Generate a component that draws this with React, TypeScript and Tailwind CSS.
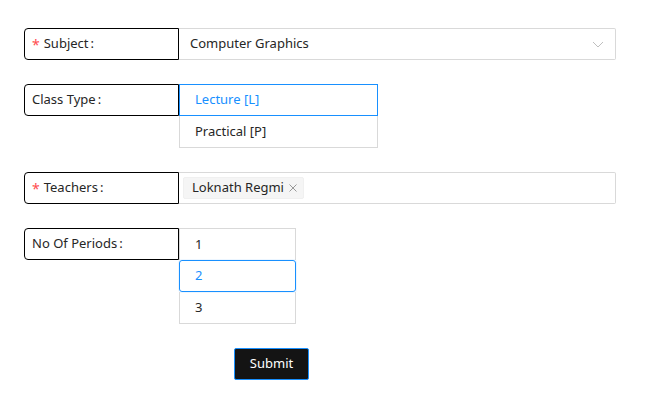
import React from "react";

const font = { fontFamily: '"Noto Sans", "Open Sans", sans-serif' };

function Label({ text, required }: { text: string; required?: boolean }) {
  return (
    <div className="w-[155px] h-[32px] shrink-0 border border-black rounded-l-[4px] flex items-center pl-[7px] text-[13px] text-[#262626]">
      {required && <span className="text-[#ff4d4f] mr-[4px] text-[14px]">*</span>}
      <span>{text}</span>
      <span className="ml-[2px]">:</span>
    </div>
  );
}

export default function App() {
  return (
    <div className="w-[660px] h-[405px] bg-white pt-[28px] pl-[24px]" style={font}>
      <div className="flex flex-col gap-[24px] w-[592px]">
        {/* Subject */}
        <div className="flex">
          <Label text="Subject" required />
          <div className="flex-1 h-[32px] border border-[#d9d9d9] border-l-0 rounded-r-[2px] flex items-center justify-between pl-[11px] pr-[11px] text-[13px] text-[#262626]">
            <span>Computer Graphics</span>
            <svg width="12" height="12" viewBox="0 0 12 12" fill="none">
              <path d="M1 4 L6 9 L11 4" stroke="#bfbfbf" strokeWidth="1" />
            </svg>
          </div>
        </div>

        {/* Class Type */}
        <div className="flex items-start">
          <Label text="Class Type" />
          <div className="flex flex-col w-[199px] text-[13px]">
            <div className="h-[32px] border border-[#1890ff] flex items-center pl-[15px] text-[#1890ff]">Lecture [L]</div>
            <div className="h-[32px] border border-[#d9d9d9] border-t-0 flex items-center pl-[15px] text-[#262626]">Practical [P]</div>
          </div>
        </div>

        {/* Teachers */}
        <div className="flex">
          <Label text="Teachers" required />
          <div className="flex-1 h-[32px] border border-[#d9d9d9] border-l-0 rounded-r-[2px] flex items-center pl-[4px] text-[13px] text-[#262626]">
            <div className="h-[22px] bg-[#f5f5f5] border border-[#f0f0f0] rounded-[2px] flex items-center pl-[8px] pr-[6px]">
              <span>Loknath Regmi</span>
              <svg className="ml-[5px]" width="8" height="8" viewBox="0 0 8 8">
                <path d="M0.5 0.5 L7.5 7.5 M7.5 0.5 L0.5 7.5" stroke="#999999" strokeWidth="1" />
              </svg>
            </div>
          </div>
        </div>

        {/* No Of Periods */}
        <div className="flex items-start">
          <Label text="No Of Periods" />
          <div className="flex flex-col w-[117px] text-[13px] text-[#262626]">
            <div className="h-[32px] border border-[#d9d9d9] border-b-0 flex items-center pl-[15px]">1</div>
            <div className="h-[32px] border border-[#1890ff] rounded-[3px] flex items-center pl-[15px] text-[#1890ff] shadow-[0_0_0_1px_rgba(24,144,255,0.08)]">2</div>
            <div className="h-[32px] border border-[#d9d9d9] border-t-0 flex items-center pl-[15px]">3</div>
          </div>
        </div>

        {/* Submit */}
        <div className="flex">
          <button className="ml-[210px] h-[32px] w-[75px] bg-[#141414] border border-[#1890ff] rounded-[2px] text-white text-[13px] flex items-center justify-center">
            Submit
          </button>
        </div>
      </div>
    </div>
  );
}
